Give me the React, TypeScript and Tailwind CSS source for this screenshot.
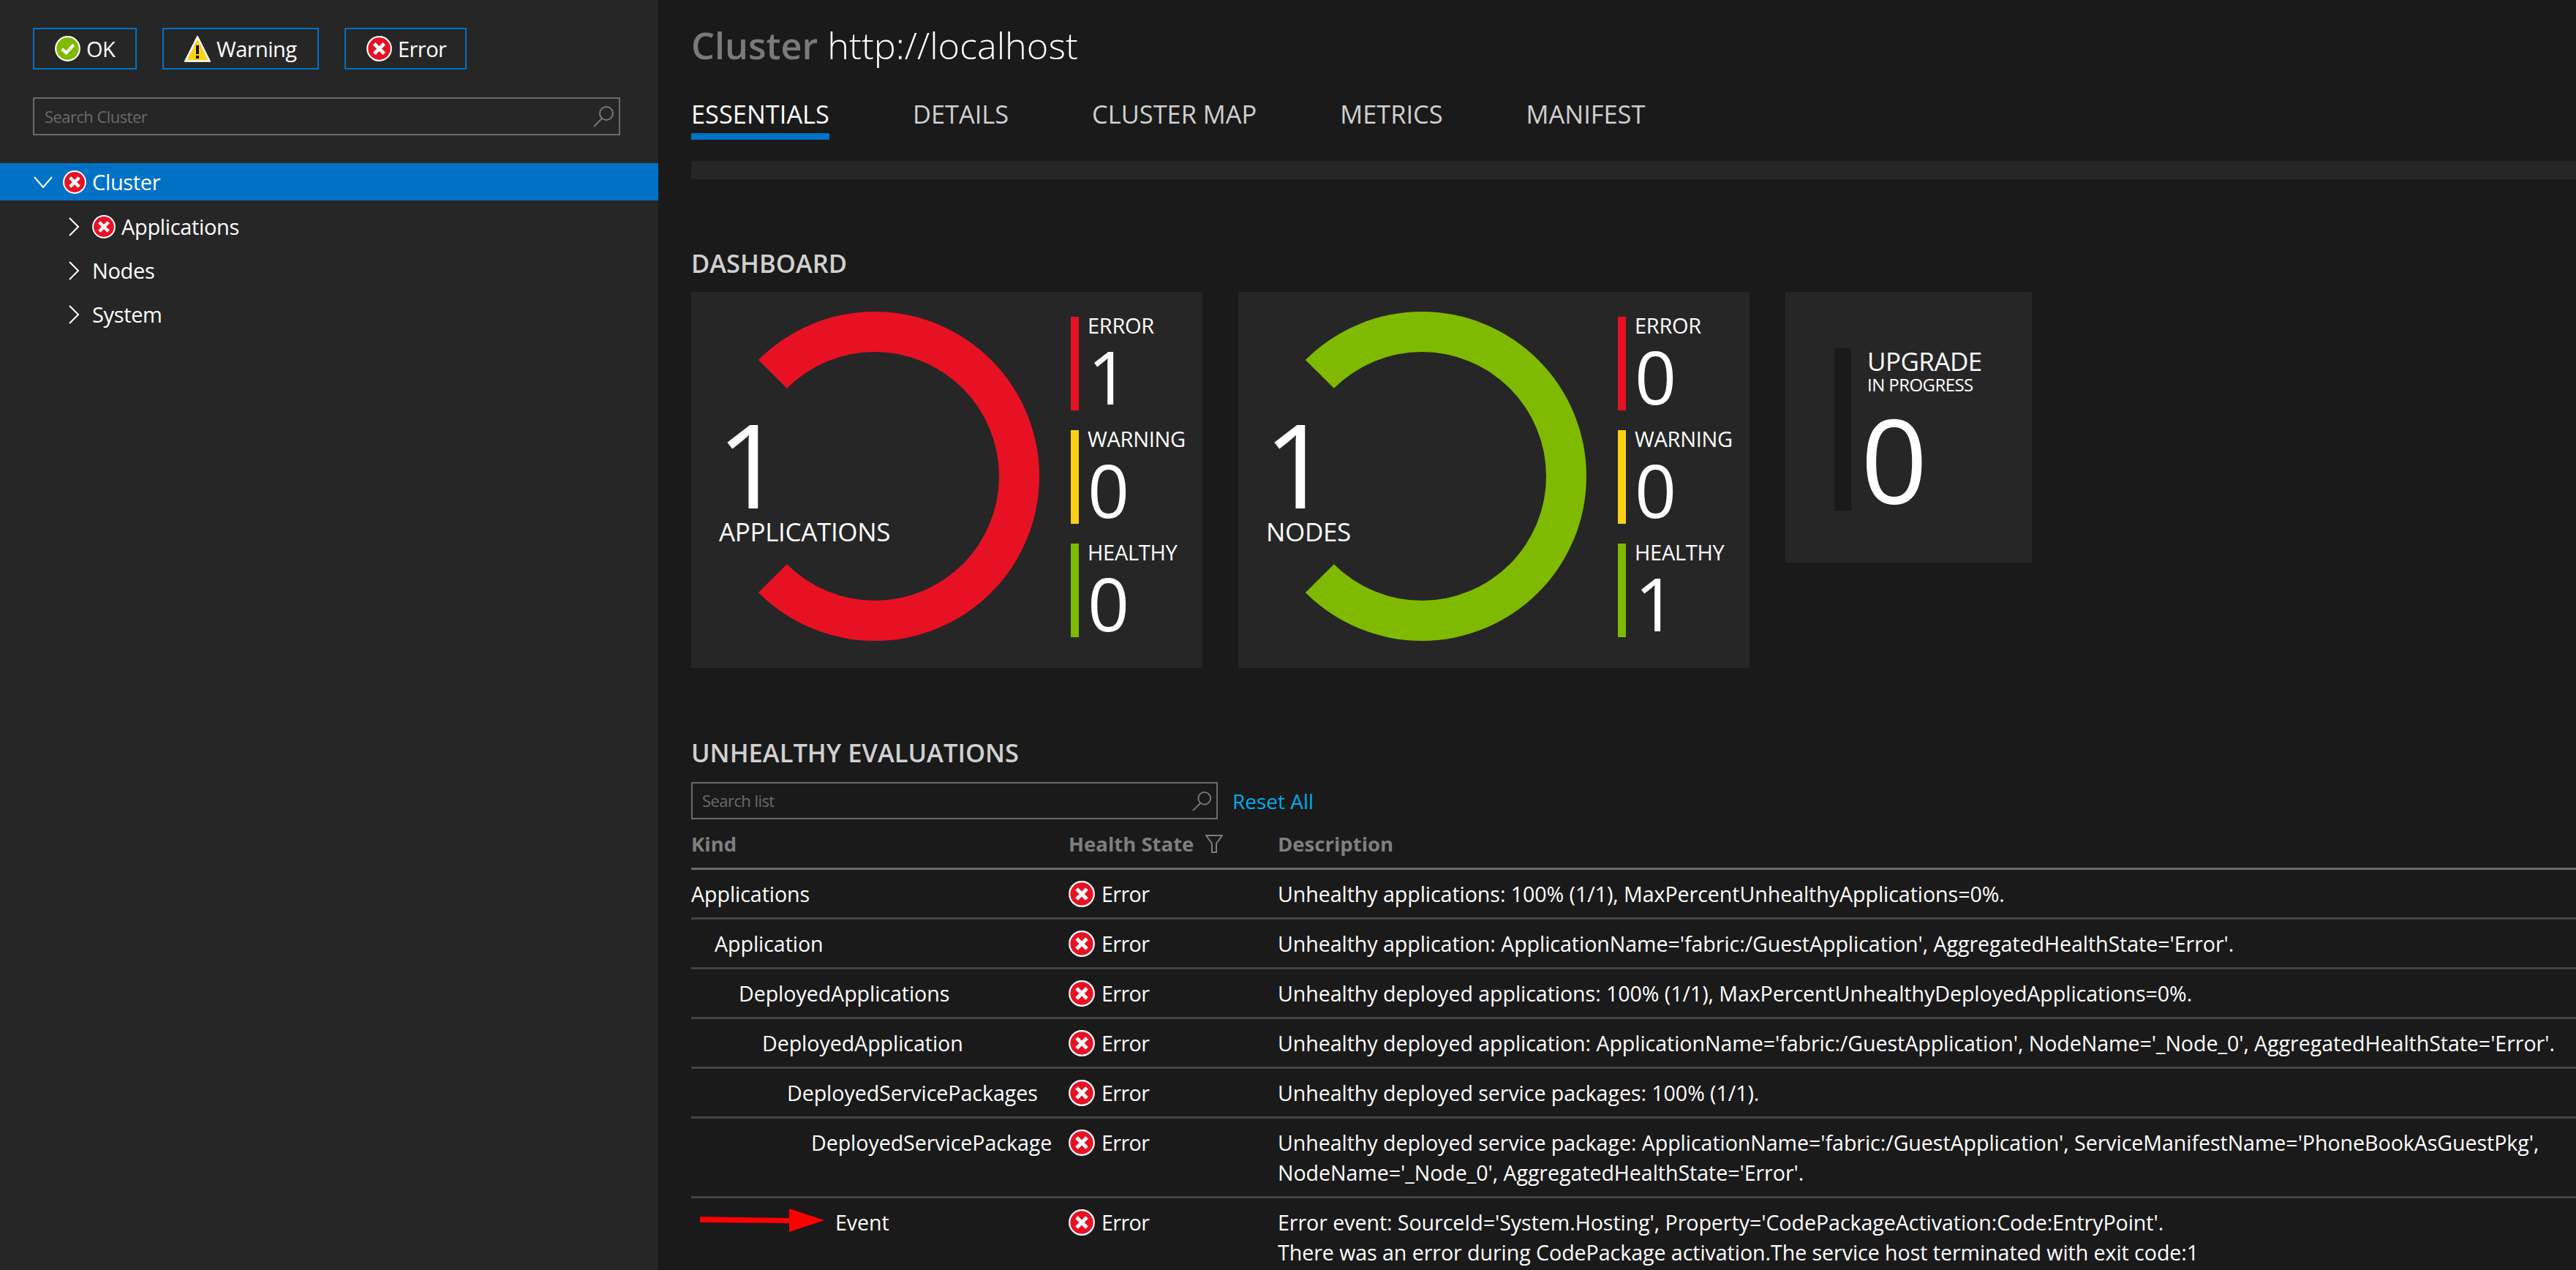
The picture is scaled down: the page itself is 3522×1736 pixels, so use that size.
import React from "react";

const RED = "#e81123";
const YELLOW = "#fcd116";
const GREEN = "#7fba00";

function ErrorIcon({ size = 36 }: { size?: number }) {
  return (
    <svg width={size} height={size} viewBox="0 0 36 36" className="shrink-0">
      <circle cx="18" cy="18" r="16.8" fill="#e81123" stroke="#fff" strokeWidth="2.2" />
      <path d="M11 11 25 25M25 11 11 25" stroke="#fff" strokeWidth="5" fill="none" />
    </svg>
  );
}

function OkIcon({ size = 35 }: { size?: number }) {
  return (
    <svg width={size} height={size} viewBox="0 0 36 36" className="shrink-0">
      <circle cx="18" cy="18" r="16.8" fill="#7fba00" stroke="#fff" strokeWidth="2.2" />
      <path d="M10 18.5 16 24 26.5 12.5" stroke="#fff" strokeWidth="4.4" fill="none" />
    </svg>
  );
}

function WarningIcon() {
  return (
    <svg width="36" height="36" viewBox="0 0 36 36" className="shrink-0">
      <path d="M18 1.5 34.5 34.5H1.5Z" fill="#fcd116" stroke="#fff" strokeWidth="2.6" />
      <rect x="16" y="13" width="4" height="12" fill="#111" />
      <rect x="16" y="27" width="4" height="4" fill="#111" />
    </svg>
  );
}

function SearchIcon({ size = 30 }: { size?: number }) {
  return (
    <svg width={size} height={size} viewBox="0 0 30 30" fill="none" stroke="#7a7a7a" strokeWidth="2">
      <circle cx="19" cy="11" r="9" />
      <path d="M13 18 2 29" />
    </svg>
  );
}

function ChevronRight() {
  return (
    <svg width="16" height="26" viewBox="0 0 16 26" fill="none" stroke="#fff" strokeWidth="2" className="shrink-0">
      <path d="M2 1 14 13 2 25" />
    </svg>
  );
}

function ChevronDown() {
  return (
    <svg width="26" height="16" viewBox="0 0 26 16" fill="none" stroke="#fff" strokeWidth="2" className="shrink-0">
      <path d="M1 1 13 15 25 1" />
    </svg>
  );
}

function ToolButton({ icon, label, width }: { icon: React.ReactNode; label: string; width: string }) {
  return (
    <div className={`flex h-[57px] items-center gap-[8px] border-2 border-[#0072c6] pl-[28px] ${width}`}>
      {icon}
      <span className="text-[29px]">{label}</span>
    </div>
  );
}

function LegendItem({ color, label, value }: { color: string; label: string; value: number }) {
  return (
    <div className="flex h-[128px]">
      <div className="w-[11px]" style={{ backgroundColor: color }} />
      <div className="pl-[12px]">
        <div className="-mt-[1px] text-[29px] leading-[26px] tracking-[-0.01em]">{label}</div>
        <div className="mt-[18px] text-[100px] leading-[76px]">{value}</div>
      </div>
    </div>
  );
}

function Ring({ color }: { color: string }) {
  // 270 degree arc, open on the left
  return (
    <svg width="450" height="450" viewBox="0 0 450 450" className="absolute left-[26px] top-[27px]">
      <path
        d="M 65.9 65.9 A 225 225 0 1 1 65.9 384.1 L 104.8 345.2 A 170 170 0 1 0 104.8 104.8 Z"
        fill={color}
      />
    </svg>
  );
}

function CountCard({ total, label, color, counts }: { total: number; label: string; color: string; counts: number[] }) {
  return (
    <div className="relative flex h-[514px] w-[699px] bg-[#262626]">
      <Ring color={color} />
      <div className="absolute left-[38px] top-[164px]">
        <div className="-ml-[3px] text-[160px] leading-[140px]">{total}</div>
        <div className="mt-[4px] text-[35px] leading-[40px] tracking-[-0.01em]">{label}</div>
      </div>
      <div className="ml-[519px] flex flex-col gap-[27px] pt-[34px]">
        <LegendItem color={RED} label="ERROR" value={counts[0]} />
        <LegendItem color={YELLOW} label="WARNING" value={counts[1]} />
        <LegendItem color={GREEN} label="HEALTHY" value={counts[2]} />
      </div>
    </div>
  );
}

const rows: { kind: string; indent: string; desc: string[] }[] = [
  { kind: "Applications", indent: "pl-0", desc: ["Unhealthy applications: 100% (1/1), MaxPercentUnhealthyApplications=0%."] },
  { kind: "Application", indent: "pl-[32px]", desc: ["Unhealthy application: ApplicationName='fabric:/GuestApplication', AggregatedHealthState='Error'."] },
  { kind: "DeployedApplications", indent: "pl-[65px]", desc: ["Unhealthy deployed applications: 100% (1/1), MaxPercentUnhealthyDeployedApplications=0%."] },
  { kind: "DeployedApplication", indent: "pl-[97px]", desc: ["Unhealthy deployed application: ApplicationName='fabric:/GuestApplication', NodeName='_Node_0', AggregatedHealthState='Error'."] },
  { kind: "DeployedServicePackages", indent: "pl-[131px]", desc: ["Unhealthy deployed service packages: 100% (1/1)."] },
  {
    kind: "DeployedServicePackage",
    indent: "pl-[164px]",
    desc: [
      "Unhealthy deployed service package: ApplicationName='fabric:/GuestApplication', ServiceManifestName='PhoneBookAsGuestPkg',",
      "NodeName='_Node_0', AggregatedHealthState='Error'.",
    ],
  },
  {
    kind: "Event",
    indent: "pl-[197px]",
    desc: [
      "Error event: SourceId='System.Hosting', Property='CodePackageActivation:Code:EntryPoint'.",
      "There was an error during CodePackage activation.The service host terminated with exit code:1",
    ],
  },
];

export default function App() {
  return (
    <div className="flex h-[1736px] overflow-hidden bg-[#1a1a1a] font-['Open_Sans',sans-serif] tracking-[-0.56px] text-white">
      <aside className="w-[900px] shrink-0 bg-[#262626] pt-[38px]">
        <div className="flex gap-[35px] pl-[45px]">
          <ToolButton icon={<OkIcon />} label="OK" width="w-[142px]" />
          <ToolButton icon={<WarningIcon />} label="Warning" width="w-[214px]" />
          <ToolButton icon={<ErrorIcon size={35} />} label="Error" width="w-[167px]" />
        </div>
        <div className="ml-[45px] mt-[38px] flex h-[52px] w-[803px] items-center justify-between border-2 border-[#6b6b6b] pl-[14px] pr-[6px]">
          <span className="text-[22px] text-[#6b6b6b]">Search Cluster</span>
          <SearchIcon />
        </div>
        <div className="mt-[38px] text-[29px] tracking-[-0.35px]">
          <div className="mb-[6px] flex h-[51px] items-center bg-[#0072c6] pl-[46px]">
            <ChevronDown />
            <span className="ml-[14px]"><ErrorIcon size={32} /></span>
            <span className="ml-[8px]">Cluster</span>
          </div>
          <div className="flex h-[60px] items-center pl-[93px]">
            <ChevronRight />
            <span className="ml-[17px]"><ErrorIcon size={32} /></span>
            <span className="ml-[8px]">Applications</span>
          </div>
          <div className="flex h-[60px] items-center pl-[93px]">
            <ChevronRight />
            <span className="ml-[17px]">Nodes</span>
          </div>
          <div className="flex h-[60px] items-center pl-[93px]">
            <ChevronRight />
            <span className="ml-[17px]">System</span>
          </div>
        </div>
      </aside>

      <main className="relative min-w-0 flex-1 pl-[45px]">
        <h1 className="mt-[30px] text-[50.4px] leading-[64px] tracking-normal">
          <span className="font-semibold text-[#7a7a7a]">Cluster</span>{" "}
          <span className="font-light">http://localhost</span>
        </h1>
        <nav className="mt-[40px] flex gap-[114px] text-[34.4px] leading-[44px] tracking-normal text-[#d0d0d0]">
          <div className="border-b-[9px] border-[#0072c6] pb-[4px] text-white">ESSENTIALS</div>
          <div>DETAILS</div>
          <div>CLUSTER MAP</div>
          <div>METRICS</div>
          <div>MANIFEST</div>
        </nav>
        <div className="mt-[29px] h-[25px] bg-[#262626]" />

        <h2 className="mt-[95px] text-[34.5px] font-semibold leading-[40px] tracking-normal text-[#d0d0d0]">DASHBOARD</h2>
        <div className="mt-[19px] flex items-start gap-[49px]">
          <CountCard total={1} label="APPLICATIONS" color={RED} counts={[1, 0, 0]} />
          <CountCard total={1} label="NODES" color={GREEN} counts={[0, 0, 1]} />
          <div className="flex h-[370px] w-[337px] items-center bg-[#262626] pl-[67px]">
            <div className="mt-[6px] h-[222px] w-[23px] bg-[#1a1a1a]" />
            <div className="pl-[22px]">
              <div className="text-[35px] leading-[34px]">UPGRADE</div>
              <div className="mt-[2px] text-[24px] leading-[26px]">IN PROGRESS</div>
              <div className="-ml-[9px] mt-[22px] text-[160px] leading-[130px]">0</div>
            </div>
          </div>
        </div>

        <h2 className="mt-[96px] text-[34.5px] font-semibold leading-[40px] tracking-normal text-[#d0d0d0]">UNHEALTHY EVALUATIONS</h2>
        <div className="mt-[20px] flex items-center gap-[20px]">
          <div className="flex h-[51px] w-[720px] items-center justify-between border-2 border-[#6b6b6b] pl-[13px] pr-[6px]">
            <span className="text-[22px] text-[#6b6b6b]">Search list</span>
            <SearchIcon size={28} />
          </div>
          <span className="text-[28px] tracking-normal text-[#00abec]">Reset All</span>
        </div>

        <div className="grid h-[69px] grid-cols-[516px_286px_1fr] items-center border-b-[3px] border-[#6b6b6b] pt-[2px] text-[27.5px] font-bold tracking-normal text-[#7f7f7f]">
          <div>Kind</div>
          <div className="flex items-center gap-[16px]">
            <span>Health State</span>
            <svg width="24" height="26" viewBox="0 0 24 26" fill="none" stroke="#7f7f7f" strokeWidth="2">
              <path d="M1 1H23L15 12V24H9V12Z" />
            </svg>
          </div>
          <div>Description</div>
        </div>

        {rows.map((r, i) => (
          <div
            key={r.kind}
            className={`grid grid-cols-[516px_286px_1fr] py-[12px] text-[28.6px] leading-[41px] tracking-[-0.06px] ${i < rows.length - 1 ? "border-b-[3px] border-[#444]" : ""}`}
          >
            <div className={r.indent}>{r.kind}</div>
            <div className="flex h-[41px] items-center gap-[9px] tracking-[-0.56px]">
              <ErrorIcon />
              <span>Error</span>
            </div>
            <div className="whitespace-nowrap">
              {r.desc.map((d) => (
                <div key={d}>{d}</div>
              ))}
            </div>
          </div>
        ))}

        {/* red annotation arrow over the Event row */}
        <svg width="170" height="34" viewBox="0 0 170 34" className="absolute left-[57px] top-[1652px]">
          <path d="M0 11 122 13V0L170 16 122 32V20L0 19Z" fill="#ff0000" />
        </svg>
      </main>
    </div>
  );
}
